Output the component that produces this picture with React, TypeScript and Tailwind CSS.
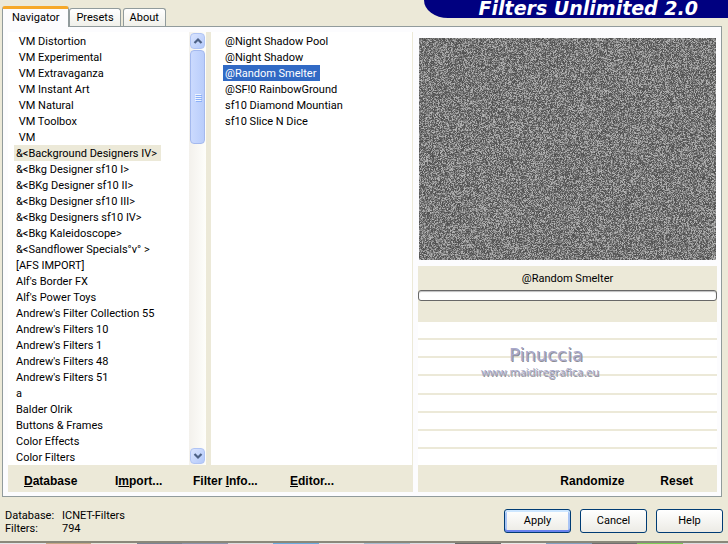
import { useLayoutEffect, useRef, useState } from "react";
import type { ReactNode } from "react";

const categories = [
  " VM Distortion",
  " VM Experimental",
  " VM Extravaganza",
  " VM Instant Art",
  " VM Natural",
  " VM Toolbox",
  " VM",
  "&<Background Designers IV>",
  "&<Bkg Designer sf10 I>",
  "&<BKg Designer sf10 II>",
  "&<Bkg Designer sf10 III>",
  "&<Bkg Designers sf10 IV>",
  "&<Bkg Kaleidoscope>",
  "&<Sandflower Specials°v° >",
  "[AFS IMPORT]",
  "Alf's Border FX",
  "Alf's Power Toys",
  "Andrew's Filter Collection 55",
  "Andrew's Filters 10",
  "Andrew's Filters 1",
  "Andrew's Filters 48",
  "Andrew's Filters 51",
  "a",
  "Balder Olrik",
  "Buttons & Frames",
  "Color Effects",
  "Color Filters",
];

const filters = [
  "@Night Shadow Pool",
  "@Night Shadow",
  "@Random Smelter",
  "@SF!0 RainbowGround",
  "sf10 Diamond Mountian",
  "sf10 Slice N Dice",
];

const sliders = [1, 2, 3, 4, 5, 6, 7, 8];

// Sliver of the window that lies behind the dialog
const behind = [
  "bg-[#e4e4e8]",
  "bg-[#c8a888]",
  "bg-[#e8e4dc]",
  "bg-[#7c8494]",
  "bg-[#8c94ac]",
  "bg-[#dcdce0]",
  "bg-[#6cace0]",
  "bg-[#e4e4e8]",
  "bg-[#a8bcd0]",
  "bg-[#d8dce4]",
  "bg-[#6c6c6c]",
  "bg-[#e8e8e8]",
  "bg-[#84a0c0]",
  "bg-[#707070]",
  "bg-[#80cc58]",
  "bg-[#dcdce0]",
];

function Tab({ children, active = false }: { children: ReactNode; active?: boolean }) {
  return (
    <button
      type="button"
      role="tab"
      aria-selected={active}
      className={
        active
          ? "relative z-10 -mb-px h-[21px] rounded-t-[3px] border border-t-[3px] border-b-0 border-[#919b9c] border-t-[#f6a828] bg-[#fcfcfe] px-[9px] pb-px leading-4"
          : "mr-0.5 h-[18px] rounded-t-[3px] border border-b-0 border-[#919b9c] bg-linear-to-b from-white to-[#f0f0ea] px-1.5 leading-4"
      }
    >
      {children}
    </button>
  );
}

function ListItem({
  label,
  selected,
  highlight,
  onSelect,
}: {
  label: string;
  selected: boolean;
  highlight: string;
  onSelect: () => void;
}) {
  return (
    <li className="flex h-4">
      <button
        type="button"
        onClick={onSelect}
        className={`h-4 whitespace-pre pr-1 pl-0.5 leading-[18px] ${selected ? highlight : ""}`}
      >
        {label}
      </button>
    </li>
  );
}

function ScrollButton({ label, d }: { label: string; d: string }) {
  return (
    <button
      type="button"
      aria-label={label}
      className="flex h-4 w-[15px] items-center justify-center rounded-sm border border-[#b0c4f4] bg-linear-to-br from-[#dbe5fe] to-[#b3c9fa]"
    >
      <svg width="10" height="8" viewBox="0 0 10 8" fill="none">
        <path d={d} stroke="#4d6185" strokeWidth="2.2" />
      </svg>
    </button>
  );
}

function ScrollBar() {
  return (
    <div className="flex flex-col items-center bg-linear-to-r from-[#f3f1ec] to-[#fefefb] py-px">
      <ScrollButton label="Scroll up" d="M1.5 6 5 2.5 8.5 6" />
      <div className="mt-px flex h-[94px] w-[15px] flex-col items-center justify-center gap-px rounded-sm border border-[#a4b9ee] bg-linear-to-r from-[#cbdafe] to-[#b9cdfb]">
        {[1, 2, 3, 4].map((n) => (
          <span key={n} className="h-px w-1.5 bg-[#eef4fe] shadow-[1px_1px_0_#8cb0f8]" />
        ))}
      </div>
      <div className="flex-1" />
      <ScrollButton label="Scroll down" d="M1.5 2 5 5.5 8.5 2" />
    </div>
  );
}

// Monochrome grain, seeded so that it is the same on every render
function Preview() {
  const ref = useRef<HTMLCanvasElement>(null);

  useLayoutEffect(() => {
    const canvas = ref.current;
    const ctx = canvas?.getContext("2d");
    if (!canvas || !ctx) return;
    const image = ctx.createImageData(canvas.width, canvas.height);
    let seed = 794;
    for (let i = 0; i < image.data.length; i += 4) {
      seed = (Math.imul(seed, 1664525) + 1013904223) >>> 0;
      const r = seed / 4294967296;
      const grey = 78 + Math.pow(r, 1.4) * 108;
      image.data[i] = grey;
      image.data[i + 1] = grey;
      image.data[i + 2] = grey;
      image.data[i + 3] = 255;
    }
    ctx.putImageData(image, 0, 0);
  }, []);

  return (
    <canvas
      ref={ref}
      width={297}
      height={222}
      role="img"
      aria-label="Filter preview"
      className="block h-[222px] w-full"
    />
  );
}

function ToolButton({ children, className = "" }: { children: ReactNode; className?: string }) {
  return (
    <button
      type="button"
      className={`text-left font-['Liberation_Sans',sans-serif] text-xs font-bold ${className}`}
    >
      {children}
    </button>
  );
}

function DialogButton({ children, primary = false }: { children: ReactNode; primary?: boolean }) {
  return (
    <button
      type="button"
      className={`h-6 w-[67px] rounded-[3px] border border-[#003c74] bg-linear-to-b from-white to-[#ecebe5] ${
        primary ? "shadow-[inset_0_-2px_0_#6982ee,inset_0_2px_0_#cee7ff,inset_2px_0_0_#a9c5f5,inset_-2px_0_0_#a9c5f5]" : ""
      }`}
    >
      {children}
    </button>
  );
}

export default function App() {
  const [category, setCategory] = useState("&<Background Designers IV>");
  const [filter, setFilter] = useState("@Random Smelter");

  return (
    <div className="flex min-h-screen flex-col bg-[#ece9d8] font-[Roboto,sans-serif] text-[11px] text-black">
      <header className="flex h-[26px] items-end justify-between pl-0.5">
        <div role="tablist" className="flex items-end">
          <Tab active>Navigator</Tab>
          <Tab>Presets</Tab>
          <Tab>About</Tab>
        </div>
        <h1 className="h-[18px] w-[304px] self-start rounded-bl-[24px_18px] bg-[#000080] pr-[30px] text-right font-['DejaVu_Sans',sans-serif] text-[19px] leading-4 font-bold whitespace-nowrap text-white italic">
          Filters Unlimited 2.0
        </h1>
      </header>

      <main className="mr-[6px] ml-0.5 grid flex-1 grid-cols-[404fr_6px_299fr] border border-[#919b9c] bg-[#fcfcfe] pt-[5px] pr-1 pb-1 pl-[5px]">
        <section className="flex flex-col">
          <div className="grid flex-1 grid-cols-[181fr_17px_5px_201fr] bg-white">
            <ul className="pt-px pl-[6px]">
              {categories.map((name) => (
                <ListItem
                  key={name}
                  label={name}
                  selected={name === category}
                  highlight="bg-[#ece9d8]"
                  onSelect={() => setCategory(name)}
                />
              ))}
            </ul>
            <ScrollBar />
            <div className="bg-[#ece9d8]" />
            <ul className="pt-px pl-3">
              {filters.map((name) => (
                <ListItem
                  key={name}
                  label={name}
                  selected={name === filter}
                  highlight="bg-[#316ac5] text-white"
                  onSelect={() => setFilter(name)}
                />
              ))}
            </ul>
          </div>
          <div className="flex h-[27px] items-center bg-[#ece9d8] pt-1 pl-4">
            <ToolButton className="w-[91px]">
              <u>D</u>atabase
            </ToolButton>
            <ToolButton className="w-[78px]">
              I<u>m</u>port...
            </ToolButton>
            <ToolButton className="w-[97px]">
              Filter <u>I</u>nfo...
            </ToolButton>
            <ToolButton>
              <u>E</u>ditor...
            </ToolButton>
          </div>
        </section>

        <div className="border-l border-[#ece9d8]" />

        <section className="flex flex-col">
          <div className="px-px pt-1.5 pb-1.5">
            <Preview />
          </div>
          <div className="h-14 bg-[#ece9d8] pt-1">
            <p className="h-4 text-center leading-[18px]">{filter}</p>
            <div
              role="progressbar"
              aria-label="Progress"
              aria-valuenow={0}
              className="mt-1 h-[11px] rounded-[3px] border border-[#686868] bg-white shadow-[inset_0_1px_1px_#bebebe]"
            />
          </div>
          <div className="relative flex flex-1 flex-col gap-0.5 bg-[#ece9d8]">
            {sliders.map((n) => (
              <div key={n} className="flex-1 bg-white" />
            ))}
            <div className="absolute top-6 left-[63px] text-center text-[#a9a9cb] [text-shadow:1px_1px_0_#8c8c94]">
              <p className="pl-3 font-['DejaVu_Sans',sans-serif] text-[18px] leading-[18px]">Pinuccia</p>
              <a href="#site" className="block font-['Open_Sans',sans-serif] text-[11px] leading-4">
                www.maidiregrafica.eu
              </a>
            </div>
          </div>
          <div className="flex h-[27px] items-center justify-end gap-9 bg-[#ece9d8] pt-1 pr-6">
            <ToolButton>Randomize</ToolButton>
            <ToolButton>Reset</ToolButton>
          </div>
        </section>
      </main>

      <footer className="flex h-11 items-start justify-between px-[5px]">
        <dl className="grid grid-cols-[57px_auto] pt-3 leading-[13px]">
          <dt>Database:</dt>
          <dd>ICNET-Filters</dd>
          <dt>Filters:</dt>
          <dd>794</dd>
        </dl>
        <div className="flex gap-[9px] pt-3">
          <DialogButton primary>Apply</DialogButton>
          <DialogButton>Cancel</DialogButton>
          <DialogButton>Help</DialogButton>
        </div>
      </footer>
      <div className="flex h-[3px] border-t-2 border-[#8a887a]">
        {behind.map((colour, i) => (
          <span key={i} className={`flex-1 ${colour}`} />
        ))}
      </div>
    </div>
  );
}
